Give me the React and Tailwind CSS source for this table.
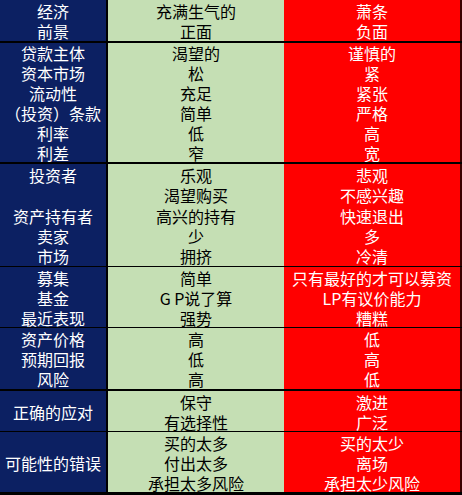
import React from 'react';

// market cycle table: each group is a block of rows, left label either per row or spanning the block
const groups = [
  {
    h: 'h-[41px]',
    sep: 'h-[2px]',
    rows: [
      ['经济', '充满生气的', '萧条'],
      ['前景', '正面', '负面'],
    ],
  },
  {
    h: 'h-[119px]',
    sep: 'h-[2px]',
    rows: [
      ['贷款主体', '渴望的', '谨慎的'],
      ['资本市场', '松', '紧'],
      ['流动性', '充足', '紧张'],
      ['（投资）条款', '简单', '严格'],
      ['利率', '低', '高'],
      ['利差', '窄', '宽'],
    ],
  },
  {
    h: 'h-[102px]',
    sep: 'h-[1px]',
    rows: [
      ['投资者', '乐观', '悲观'],
      ['', '渴望购买', '不感兴趣'],
      ['资产持有者', '高兴的持有', '快速退出'],
      ['卖家', '少', '多'],
      ['市场', '拥挤', '冷清'],
    ],
  },
  {
    h: 'h-[60px]',
    sep: 'h-[1px]',
    rows: [
      ['募集', '简单', '只有最好的才可以募资'],
      ['基金', 'G P说了算', 'LP有议价能力'],
      ['最近表现', '强势', '糟糕'],
    ],
  },
  {
    h: 'h-[61px]',
    sep: 'h-[2px]',
    rows: [
      ['资产价格', '高', '低'],
      ['预期回报', '低', '高'],
      ['风险', '高', '低'],
    ],
  },
  {
    h: 'h-[40px]',
    sep: 'h-[1px]',
    label: '正确的应对',
    rows: [
      ['', '保守', '激进'],
      ['', '有选择性', '广泛'],
    ],
  },
  {
    h: 'h-[60px]',
    sep: 'h-[3px]',
    label: '可能性的错误',
    rows: [
      ['', '买的太多', '买的太少'],
      ['', '付出太多', '离场'],
      ['', '承担太多风险', '承担太少风险'],
    ],
  },
];

const Cell = ({ children }) => (
  <div className="flex-1 flex items-center justify-center whitespace-nowrap pt-[1px]">{children}</div>
);

export default function App() {
  return (
    <div
      className="w-[462px] h-[495px] flex flex-col overflow-hidden bg-black text-[16px] leading-none"
      style={{ fontFamily: '"Noto Sans CJK SC", "Noto Sans", sans-serif' }}
    >
      {groups.map((g, i) => (
        <React.Fragment key={i}>
          <div className={`flex w-full ${g.h}`}>
            <div className="w-[106px] bg-[#0c2062] text-white flex flex-col">
              {g.label ? (
                <Cell>{g.label}</Cell>
              ) : (
                g.rows.map((r, j) => <Cell key={j}>{r[0]}</Cell>)
              )}
            </div>
            <div className="w-[2px] bg-black" />
            <div className="w-[176px] bg-[#c5dfb4] text-black flex flex-col">
              {g.rows.map((r, j) => (
                <Cell key={j}>{r[1]}</Cell>
              ))}
            </div>
            <div className="flex-1 bg-[#ff0000] text-white flex flex-col">
              {g.rows.map((r, j) => (
                <Cell key={j}>{r[2]}</Cell>
              ))}
            </div>
            <div className="w-[2px] bg-[#3a0000]" />
          </div>
          <div className={`w-full bg-black ${g.sep}`} />
        </React.Fragment>
      ))}
    </div>
  );
}
